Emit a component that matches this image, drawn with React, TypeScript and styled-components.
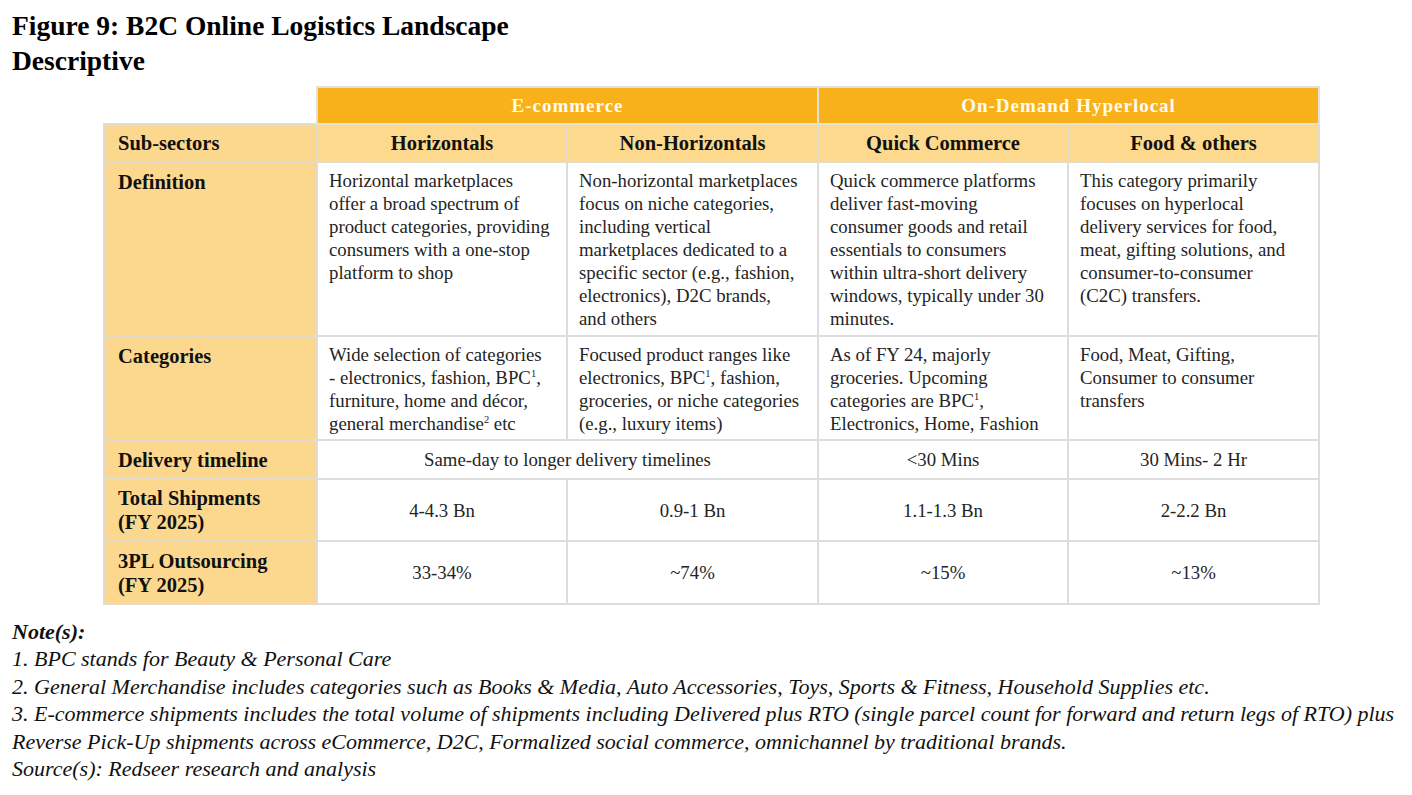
import React from "react";
import styled, { createGlobalStyle } from "styled-components";

const Global = createGlobalStyle`
  html, body { margin: 0; padding: 0; background: #ffffff; }
  body { font-family: "Liberation Serif", "Times New Roman", serif; color: #111; }
`;

const Page = styled.div`
  width: 1412px;
  height: 795px;
  box-sizing: border-box;
  padding: 8px 0 0 12px;
  overflow: hidden;
`;

const Title = styled.h1`
  margin: 0;
  font-family: "Liberation Serif", serif;
  font-weight: 700;
  font-size: 27.5px;
  line-height: 35px;
  color: #000;
`;

const TableWrap = styled.div`
  padding: 8px 0 0 91px;
`;

const Table = styled.table`
  border-collapse: collapse;
  table-layout: fixed;
  width: 1215px;
`;

const Col = styled.col<{ $w: number }>`
  width: ${(p) => p.$w}px;
`;

const Row = styled.tr<{ $h: number }>`
  height: ${(p) => p.$h}px;
`;

const Blank = styled.td`
  border-top: hidden;
  border-left: hidden;
  background: transparent;
  padding: 0;
`;

const GroupHead = styled.th`
  background: #f8b11b;
  color: #fffaf0;
  border: 2px solid #e6e1d6;
  font-size: 19px;
  font-weight: 700;
  letter-spacing: 1px;
  text-align: center;
  padding: 0;
`;

const SubHead = styled.th`
  background: #fdd98e;
  color: #111;
  border: 2px solid #e3dccd;
  font-size: 20.5px;
  font-weight: 700;
  text-align: center;
  padding: 0;
`;

const Label = styled.th<{ $top?: boolean }>`
  background: #fcd88f;
  color: #111;
  border: 2px solid #e3dccd;
  font-size: 20.5px;
  line-height: 24px;
  font-weight: 700;
  text-align: left;
  vertical-align: ${(p) => (p.$top ? "top" : "middle")};
  padding: ${(p) => (p.$top ? "7px 8px 0 13px" : "0 8px 0 13px")};
`;

const Cell = styled.td<{ $top?: boolean }>`
  background: #ffffff;
  border: 2px solid #dddddd;
  font-size: 18.8px;
  line-height: 23px;
  color: #242424;
  text-align: ${(p) => (p.$top ? "left" : "center")};
  vertical-align: ${(p) => (p.$top ? "top" : "middle")};
  padding: ${(p) => (p.$top ? "6px 4px 0 11px" : "0 6px")};
`;

const Line = styled.div`
  white-space: nowrap;
`;

const Sup = styled.span`
  font-size: 10.5px;
  line-height: 0;
  vertical-align: 7px;
`;

const Notes = styled.div`
  padding-top: 13px;
  font-family: "Liberation Serif", serif;
  font-style: italic;
  font-size: 22px;
  line-height: 27.4px;
  color: #111;
`;

const NoteHead = styled.div`
  font-weight: 700;
`;

const NoteLine = styled.div``;

type Content = React.ReactNode[];

function TextCell({ lines }: { lines: Content }) {
  return (
    <Cell $top>
      {lines.map((l, i) => (
        <Line key={i}>{l}</Line>
      ))}
    </Cell>
  );
}

const definitions: Content[] = [
  ["Horizontal marketplaces", "offer a broad spectrum of", "product categories, providing", "consumers with a one-stop", "platform to shop"],
  [
    "Non-horizontal marketplaces",
    "focus on niche categories,",
    "including vertical",
    "marketplaces dedicated to a",
    "specific sector (e.g., fashion,",
    "electronics), D2C brands,",
    "and others",
  ],
  [
    "Quick commerce platforms",
    "deliver fast-moving",
    "consumer goods and retail",
    "essentials to consumers",
    "within ultra-short delivery",
    "windows, typically under 30",
    "minutes.",
  ],
  ["This category primarily", "focuses on hyperlocal", "delivery services for food,", "meat, gifting solutions, and", "consumer-to-consumer", "(C2C) transfers."],
];

const categories: Content[] = [
  [
    "Wide selection of categories",
    <>
      - electronics, fashion, BPC<Sup>1</Sup>,
    </>,
    "furniture, home and décor,",
    <>
      general merchandise<Sup>2</Sup> etc
    </>,
  ],
  [
    "Focused product ranges like",
    <>
      electronics, BPC<Sup>1</Sup>, fashion,
    </>,
    "groceries, or niche categories",
    "(e.g., luxury items)",
  ],
  [
    "As of FY 24, majorly",
    "groceries. Upcoming",
    <>
      categories are BPC<Sup>1</Sup>,
    </>,
    "Electronics, Home, Fashion",
  ],
  ["Food, Meat, Gifting,", "Consumer to consumer", "transfers"],
];

export default function App() {
  return (
    <Page>
      <Global />
      <Title>
        Figure 9: B2C Online Logistics Landscape
        <br />
        Descriptive
      </Title>
      <TableWrap>
        <Table>
          <colgroup>
            <Col $w={213} />
            <Col $w={250} />
            <Col $w={251} />
            <Col $w={250} />
            <Col $w={251} />
          </colgroup>
          <tbody>
            <Row $h={37}>
              <Blank />
              <GroupHead colSpan={2}>E-commerce</GroupHead>
              <GroupHead colSpan={2}>On-Demand Hyperlocal</GroupHead>
            </Row>
            <Row $h={38}>
              <Label>Sub-sectors</Label>
              <SubHead>Horizontals</SubHead>
              <SubHead>Non-Horizontals</SubHead>
              <SubHead>Quick Commerce</SubHead>
              <SubHead>Food &amp; others</SubHead>
            </Row>
            <Row $h={174}>
              <Label $top>Definition</Label>
              {definitions.map((lines, i) => (
                <TextCell key={i} lines={lines} />
              ))}
            </Row>
            <Row $h={104}>
              <Label $top>Categories</Label>
              {categories.map((lines, i) => (
                <TextCell key={i} lines={lines} />
              ))}
            </Row>
            <Row $h={39}>
              <Label>Delivery timeline</Label>
              <Cell colSpan={2}>Same-day to longer delivery timelines</Cell>
              <Cell>&lt;30 Mins</Cell>
              <Cell>30 Mins- 2 Hr</Cell>
            </Row>
            <Row $h={62}>
              <Label>
                Total Shipments
                <br />
                (FY 2025)
              </Label>
              <Cell>4-4.3 Bn</Cell>
              <Cell>0.9-1 Bn</Cell>
              <Cell>1.1-1.3 Bn</Cell>
              <Cell>2-2.2 Bn</Cell>
            </Row>
            <Row $h={63}>
              <Label>
                3PL Outsourcing
                <br />
                (FY 2025)
              </Label>
              <Cell>33-34%</Cell>
              <Cell>~74%</Cell>
              <Cell>~15%</Cell>
              <Cell>~13%</Cell>
            </Row>
          </tbody>
        </Table>
      </TableWrap>
      <Notes>
        <NoteHead>Note(s):</NoteHead>
        <NoteLine>1. BPC stands for Beauty &amp; Personal Care</NoteLine>
        <NoteLine>
          2. General Merchandise includes categories such as Books &amp; Media, Auto Accessories, Toys, Sports &amp;
          Fitness, Household Supplies etc.
        </NoteLine>
        <NoteLine>
          3. E-commerce shipments includes the total volume of shipments including Delivered plus RTO (single parcel
          count for forward and return legs of RTO) plus Reverse Pick-Up shipments across eCommerce, D2C, Formalized
          social commerce, omnichannel by traditional brands.
        </NoteLine>
        <NoteLine>Source(s): Redseer research and analysis</NoteLine>
      </Notes>
    </Page>
  );
}
